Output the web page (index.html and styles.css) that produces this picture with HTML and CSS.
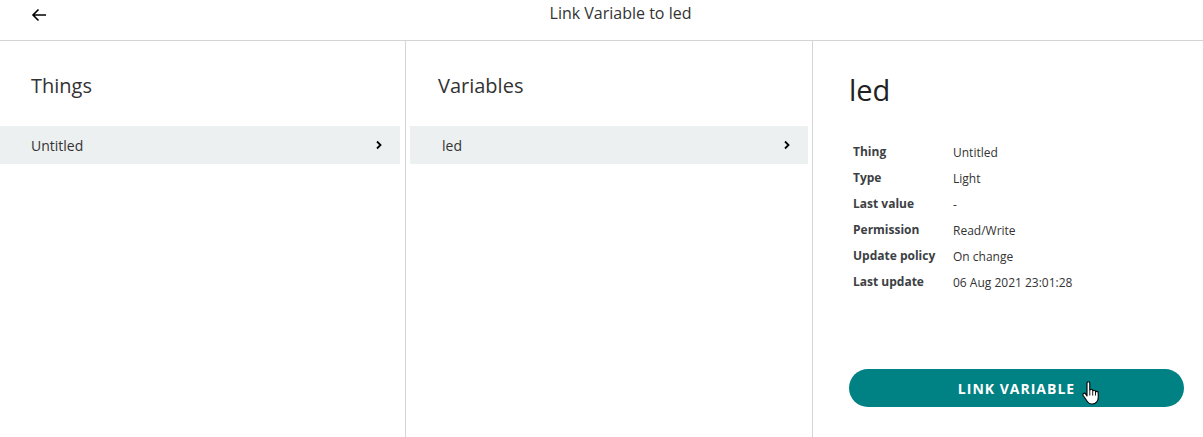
FILE: index.html
```html
<!DOCTYPE html>
<html>
<head>
<meta charset="utf-8">
<link rel="stylesheet" href="styles.css">
</head>
<body>
<div class="page">
  <header class="topbar">
    <button class="back" aria-label="Back">
      <svg width="16" height="14" viewBox="0 0 16 14"><path d="M15 7H2M7.5 1.5 2 7l5.5 5.5" fill="none" stroke="#000" stroke-width="1.6"/></svg>
    </button>
    <div class="title">Link Variable to led</div>
  </header>
  <main class="cols">
    <section class="col col-things">
      <h2 class="col-title">Things</h2>
      <div class="row">
        <span>Untitled</span>
        <svg class="chev" width="8" height="10" viewBox="0 0 8 10"><path d="M2 1.5 5.5 5 2 8.5" fill="none" stroke="#000" stroke-width="1.8"/></svg>
      </div>
    </section>
    <section class="col col-vars">
      <h2 class="col-title">Variables</h2>
      <div class="row">
        <span>led</span>
        <svg class="chev" width="8" height="10" viewBox="0 0 8 10"><path d="M2 1.5 5.5 5 2 8.5" fill="none" stroke="#000" stroke-width="1.8"/></svg>
      </div>
    </section>
    <section class="col col-detail">
      <h1 class="detail-title">led</h1>
      <dl class="props">
        <dt>Thing</dt><dd>Untitled</dd>
        <dt>Type</dt><dd>Light</dd>
        <dt>Last value</dt><dd>-</dd>
        <dt>Permission</dt><dd>Read/Write</dd>
        <dt>Update policy</dt><dd>On change</dd>
        <dt>Last update</dt><dd>06 Aug 2021 23:01:28</dd>
      </dl>
      <div class="btn-wrap">
        <button class="link-btn">LINK VARIABLE</button>
        <svg class="cursor" width="18" height="24" viewBox="0 0 18 24"><path d="M5 2.2c0-.9.6-1.5 1.4-1.5s1.4.6 1.4 1.5v7.3c.2-.8.8-1.2 1.5-1.2.8 0 1.4.6 1.4 1.4v.6c.2-.7.8-1.1 1.4-1.1.8 0 1.4.6 1.4 1.4v.8c.2-.6.8-1 1.3-1 .8 0 1.4.6 1.4 1.4v5c0 3.3-2.4 6.2-5.9 6.2H9.5c-1.8 0-3-.8-4-2.2L1.2 14.5c-.5-.8-.3-1.7.4-2.1.7-.4 1.5-.2 2 .5L5 15V2.2z" fill="#fff" stroke="#000" stroke-width="1.1" stroke-linejoin="round"/><path d="M7.8 10v4.5M10.7 10.6v4M13.5 11.4v3.2" stroke="#000" stroke-width=".9" fill="none"/></svg>
      </div>
    </section>
  </main>
</div>
</body>
</html>
```

FILE: styles.css
```css
* { box-sizing: border-box; }
html, body { margin: 0; padding: 0; background: #fff; }
body {
  font-family: "Open Sans", "Noto Sans", sans-serif;
  color: #2f3337;
  width: 1203px;
  height: 437px;
  overflow: hidden;
}
.page { display: flex; flex-direction: column; height: 437px; }
.topbar {
  height: 41px;
  border-bottom: 1px solid #d4d4d4;
  display: flex;
  align-items: flex-start;
  position: relative;
  flex: none;
}
.back {
  border: 0;
  background: none;
  padding: 0;
  margin: 8px 0 0 31px;
  width: 16px;
  height: 14px;
  display: flex;
  cursor: pointer;
}
.title {
  position: absolute;
  left: 38px;
  right: 0;
  top: 2px;
  text-align: center;
  font-size: 16px;
  line-height: 22px;
  color: #333;
  pointer-events: none;
}
.cols { flex: 1; display: flex; }
.col { display: flex; flex-direction: column; }
.col-things { width: 406px; border-right: 1px solid #d4d4d4; padding: 0 5px 0 0; }
.col-vars { width: 407px; border-right: 1px solid #d4d4d4; padding: 0 4px 0 4px; }
.col-detail { flex: 1; padding: 0 19px 0 36px; }
.col-title {
  font-size: 20px;
  font-weight: 400;
  line-height: 26px;
  margin: 32px 0 0 31px;
  color: #333;
}
.col-vars .col-title { margin-left: 28px; }
.row {
  margin-top: 27px;
  height: 38px;
  background: #edf0f1;
  display: flex;
  align-items: center;
  justify-content: space-between;
  padding: 0 17px 0 31px;
  font-size: 14px;
  color: #333;
}
.col-vars .row { padding-left: 32px; }
.chev { display: block; }
.detail-title {
  font-size: 29px;
  font-weight: 400;
  line-height: 38px;
  margin: 30px 0 0 0;
  color: #222;
}
.props {
  display: grid;
  grid-template-columns: 100px auto;
  grid-auto-rows: 26px;
  margin: 34px 0 0 4px;
  font-size: 12px;
  line-height: 18px;
  align-items: start;
}
.props dt { font-weight: 700; color: #3c4043; }
.props dd { margin: 1px 0 0 0; color: #333; }
.btn-wrap { margin-top: auto; margin-bottom: 30px; position: relative; }
.link-btn {
  width: 335px;
  height: 38px;
  border: 0;
  border-radius: 19px;
  background: #008184;
  color: #fff;
  font-family: "Open Sans", "Noto Sans", sans-serif;
  font-weight: 700;
  font-size: 14px;
  letter-spacing: 1px;
  padding: 0;
  display: block;
}
.cursor { position: absolute; left: 233px; top: 12px; }
```
